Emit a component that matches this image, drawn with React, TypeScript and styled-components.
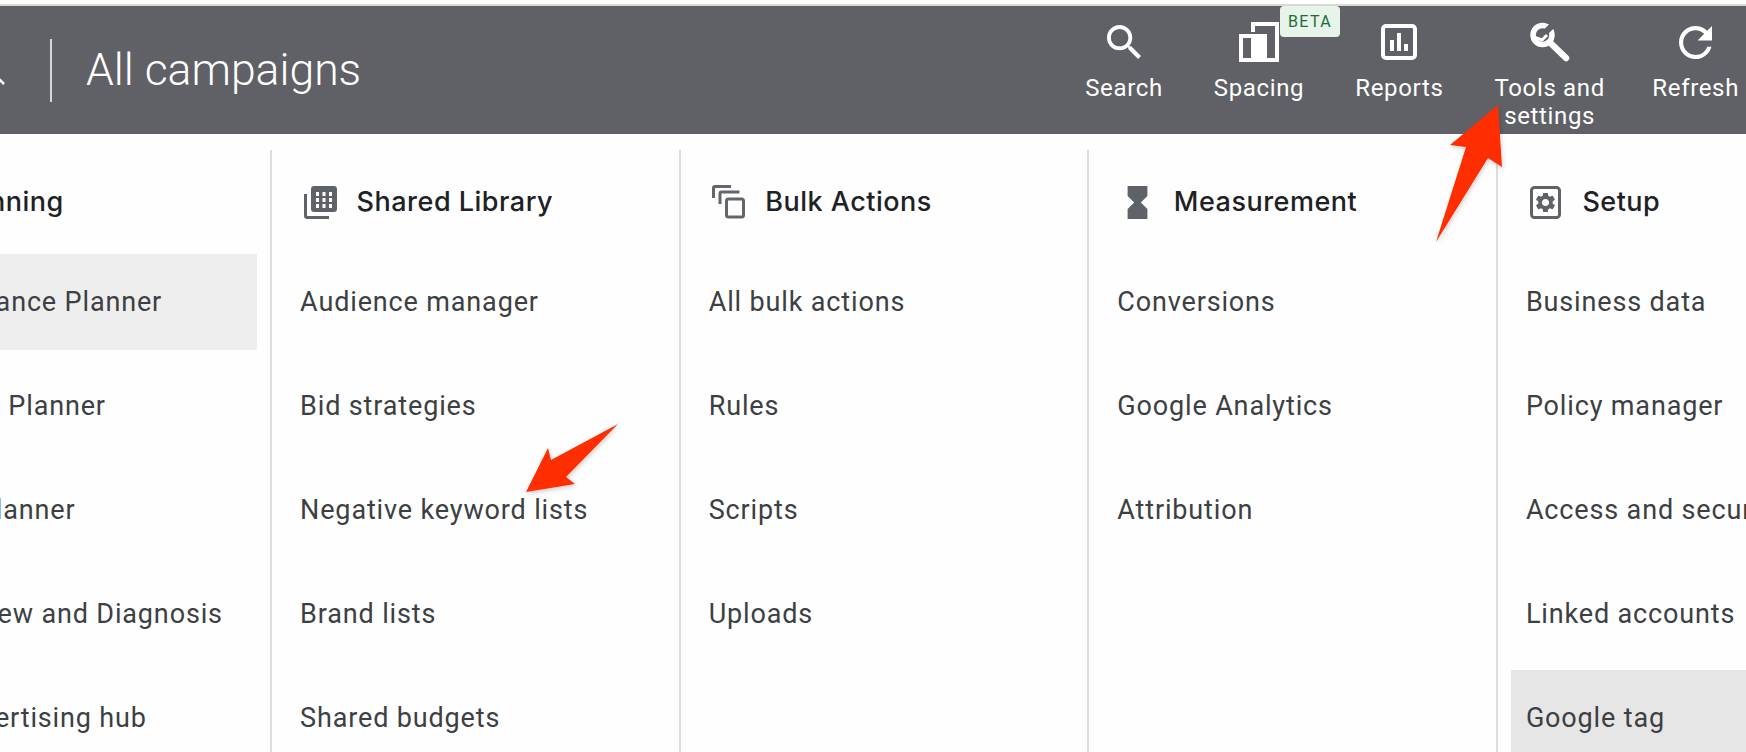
import React from "react"
import styled, {createGlobalStyle} from "styled-components"

const GlobalStyle = createGlobalStyle`
    html, body {
        margin: 0;
        padding: 0;
        background: #fefefe;
        overflow: hidden;
    }
`
const Page = styled.div`
    position: relative;
    width: 1746px;
    height: 752px;
    overflow: hidden;
    font-family: Roboto, "Liberation Sans", sans-serif;
    border-top: 4px solid #fff;
    box-sizing: border-box;
`
const Header = styled.header`
    display: flex;
    justify-content: space-between;
    align-items: flex-start;
    height: 130px;
    box-sizing: border-box;
    background: #5f6166;
    border-top: 2px solid #d9d9d6;
    padding-right: 7px;
`
const TitleGroup = styled.div`
    display: flex;
    align-items: center;
    height: 128px;
`
const Chevron = styled.svg`
    width: 5px;
    height: 12px;
    margin: 26px 45px 0 0;
`
const Separator = styled.div`
    width: 2px;
    height: 63px;
    background: #d5d6d8;
`
const Title = styled.h1`
    margin: 0 0 0 34px;
    font-size: 44.5px;
    font-weight: 300;
    color: #fff;
`
const Nav = styled.nav`
    display: flex;
    gap: 51px;
    padding-top: 16px;
`
const NavItem = styled.div<{$pull?: number}>`
    position: relative;
    display: flex;
    flex-direction: column;
    align-items: center;
    margin-right: ${p => p.$pull || 0}px;
    color: #fff;
`
const NavIcon = styled.div`
    height: 40px;
    display: flex;
    align-items: center;
    margin-bottom: 12px;
`
const NavLabel = styled.div`
    font-size: 24px;
    line-height: 28px;
    letter-spacing: 0.65px;
    text-align: center;
    white-space: nowrap;
`
const Beta = styled.span`
    position: absolute;
    top: -16px;
    left: calc(50% + 21px);
    width: 60px;
    height: 31px;
    display: flex;
    align-items: center;
    justify-content: center;
    border-radius: 4px;
    background: #e6f4ea;
    color: #1e6b3a;
    font-size: 16px;
    letter-spacing: 1.4px;
`
const Columns = styled.main`
    display: flex;
    margin: 16px 0 0 -138.5px;
`
const Column = styled.section`
    flex: 0 0 408.6px;
    box-sizing: border-box;
    border-left: 2px solid #dadce0;
    height: 640px;
`
const ColumnHead = styled.div`
    display: flex;
    align-items: center;
    height: 104px;
    padding-left: 30px;
`
const HeadIcon = styled.div`
    width: 36px;
    margin-right: 18.5px;
    display: flex;
    justify-content: center;
`
const HeadTitle = styled.h2`
    margin: 0 0 2px;
    font-family: Inter, Roboto, sans-serif;
    font-size: 27px;
    font-weight: 500;
    letter-spacing: 0.5px;
    color: #202124;
    white-space: nowrap;
`
const Item = styled.div<{$shade?: string}>`
    display: flex;
    align-items: center;
    height: 96px;
    margin: 0 13px 8px;
    padding-left: 15px;
    background: ${p => p.$shade || "transparent"};
    font-size: 27px;
    letter-spacing: 0.85px;
    color: #3c4043;
    white-space: nowrap;
    overflow: hidden;
`
const Annotations = styled.svg`
    position: absolute;
    left: 0;
    top: -4px;
    width: 1746px;
    height: 752px;
    pointer-events: none;
`

const SearchIcon = () => (
    <svg width="34" height="34" viewBox="3 3 17.5 17.5" fill="#fff">
        <path d="M15.5 14h-.79l-.28-.27C15.41 12.59 16 11.11 16 9.5 16 5.91 13.09 3 9.5 3S3 5.91 3 9.5 5.91 16 9.5 16c1.61 0 3.09-.59 4.23-1.57l.27.28v.79l5 4.99L20.49 19l-4.99-5zm-6 0C7.01 14 5 11.99 5 9.5S7.01 5 9.5 5 14 7.01 14 9.5 11.99 14 9.5 14z" />
    </svg>
)
const SpacingIcon = () => (
    <svg width="40" height="40" viewBox="0 0 40 40">
        <path d="M14 10V2h24v36H14" fill="none" stroke="#fff" strokeWidth="4" />
        <rect x="2" y="14" width="24" height="24" fill="none" stroke="#fff" strokeWidth="4" />
        <rect x="12" y="12" width="16" height="28" fill="#fff" />
    </svg>
)
const ReportsIcon = () => (
    <svg width="36" height="36" viewBox="0 0 36 36">
        <rect x="2" y="2" width="32" height="32" rx="3" fill="none" stroke="#fff" strokeWidth="4" />
        <path d="M9 16h4v11H9zM16 9h4v18h-4zM23 20h4v7h-4z" fill="#fff" />
    </svg>
)
const ToolsIcon = () => (
    <svg width="40" height="40" viewBox="0 0 40 40">
        <circle cx="12.5" cy="13" r="9.5" fill="none" stroke="#fff" strokeWidth="5.5" />
        <path d="M13 12.5L25 1" stroke="#5f6166" strokeWidth="6" />
        <path d="M5 15.5L12 18 17 13" fill="none" stroke="#fff" strokeWidth="3" />
        <path d="M20 20.5L36 36" stroke="#fff" strokeWidth="6.5" strokeLinecap="round" />
    </svg>
)
const RefreshIcon = () => (
    <svg width="33" height="33" viewBox="4 4 16 16" fill="#fff">
        <path d="M17.65 6.35C16.2 4.9 14.21 4 12 4c-4.42 0-7.99 3.58-7.99 8s3.57 8 7.99 8c3.73 0 6.84-2.55 7.73-6h-2.08c-.82 2.33-3.04 4-5.65 4-3.31 0-6-2.69-6-6s2.69-6 6-6c1.66 0 3.14.69 4.22 1.78L13 11h7V4l-2.35 2.35z" />
    </svg>
)

const LibraryIcon = () => (
    <svg width="33" height="33" viewBox="0 0 33 33" fill="#5f6368">
        <path d="M0 8h3v21c0 .6.4 1 1 1h21v3H3c-1.700 0-3-1.300-3-3z" />
        <path fillRule="evenodd" d="M10 0h20c1.700 0 3 1.300 3 3v20c0 1.700-1.300 3-3 3H10c-1.700 0-3-1.300-3-3V3c0-1.700 1.300-3 3-3zM12 6v4h3V6zM18.500 6v4h3V6zM25 6v4h3V6zM12 12v4h3v-4zM18.500 12v4h3v-4zM25 12v4h3v-4zM12 18v4h3v-4zM18.500 18v4h3v-4zM25 18v4h3v-4z" />
    </svg>
)
const BulkIcon = () => (
    <svg width="33" height="34" viewBox="0 0 33 34" fill="none" stroke="#63666a" strokeWidth="3">
        <path d="M1.500 13V3c0-.8.600-1.500 1.500-1.500h16" />
        <path d="M8 19V8.500c0-.8.600-1.500 1.500-1.500h18" />
        <rect x="14.500" y="14" width="17" height="18" rx="2" />
    </svg>
)
const HourglassIcon = () => (
    <svg width="21" height="33" viewBox="6 2 12 20" fill="#5f6368">
        <path d="M6 2v6h.01L6 8.010 10 12l-4 4 .01.01H6V22h12v-5.990h-.01L18 16l-4-4 4-3.990-.01-.01H18V2H6z" />
    </svg>
)
const SetupIcon = () => (
    <svg width="31" height="33" viewBox="0 0 31 33">
        <rect x="1.500" y="1.500" width="28" height="30" rx="3" fill="none" stroke="#5f6368" strokeWidth="3" />
        <g transform="translate(3.500 4.500) scale(1)">
            <path fill="#5f6368" d="M19.140 12.940c.04-.3.060-.61.060-.94 0-.32-.02-.64-.07-.94l2.030-1.580a.49.49 0 0 0 .12-.61l-1.920-3.320a.488.488 0 0 0-.59-.22l-2.390.96c-.5-.38-1.030-.7-1.620-.94l-.36-2.540a.484.484 0 0 0-.48-.41h-3.840c-.24 0-.43.170-.47.410l-.36 2.540c-.59.240-1.130.57-1.620.94l-2.390-.96c-.22-.08-.47 0-.59.220L2.740 8.870c-.12.210-.08.470.12.610l2.030 1.580c-.05.3-.09.630-.09.940s.02.640.07.940l-2.030 1.580a.49.49 0 0 0-.12.610l1.920 3.320c.12.220.37.290.59.220l2.390-.96c.5.380 1.030.7 1.620.94l.36 2.540c.05.240.24.410.48.410h3.840c.24 0 .44-.17.470-.41l.36-2.540c.59-.24 1.130-.56 1.620-.94l2.390.96c.22.080.47 0 .59-.22l1.920-3.320c.12-.22.070-.47-.12-.61l-2.010-1.580zM12 15.600c-1.980 0-3.600-1.620-3.600-3.600s1.620-3.600 3.600-3.600 3.600 1.620 3.600 3.600-1.620 3.600-3.600 3.600z" />
        </g>
    </svg>
)

const navItems = [
    {label: "Search", icon: <SearchIcon />},
    {label: "Spacing", icon: <SpacingIcon />, beta: true},
    {label: "Reports", icon: <ReportsIcon />},
    {label: <>Tools and<br />settings</>, icon: <ToolsIcon />, pull: -3.5},
    {label: "Refresh", icon: <RefreshIcon />},
]

const columns = [
    {
        title: "Planning",
        icon: null,
        items: ["Performance Planner", "Keyword Planner", "Reach Planner", "Ad Preview and Diagnosis", "App advertising hub"],
        shades: {0: "#eeeeee"} as Record<number, string>,
    },
    {
        title: "Shared Library",
        icon: <LibraryIcon />,
        items: ["Audience manager", "Bid strategies", "Negative keyword lists", "Brand lists", "Shared budgets"],
    },
    {
        title: "Bulk Actions",
        icon: <BulkIcon />,
        items: ["All bulk actions", "Rules", "Scripts", "Uploads"],
    },
    {
        title: "Measurement",
        icon: <HourglassIcon />,
        items: ["Conversions", "Google Analytics", "Attribution"],
    },
    {
        title: "Setup",
        icon: <SetupIcon />,
        items: ["Business data", "Policy manager", "Access and security", "Linked accounts", "Google tag"],
        shades: {4: "#e6e6e6"} as Record<number, string>,
    },
]

const App = () => {
    return (
        <Page>
            <GlobalStyle />
            <Header>
                <TitleGroup>
                    <Chevron viewBox="0 0 5 12">
                        <path d="M-3 0L4 7" stroke="#fff" strokeWidth="2.500" fill="none" />
                    </Chevron>
                    <Separator />
                    <Title>All campaigns</Title>
                </TitleGroup>
                <Nav>
                    {navItems.map((item, i) => (
                        <NavItem key={i} $pull={item.pull}>
                            <NavIcon>{item.icon}</NavIcon>
                            <NavLabel>{item.label}</NavLabel>
                            {item.beta && <Beta>BETA</Beta>}
                        </NavItem>
                    ))}
                </Nav>
            </Header>
            <Columns>
                {columns.map(col => (
                    <Column key={col.title}>
                        <ColumnHead>
                            <HeadIcon>{col.icon}</HeadIcon>
                            <HeadTitle>{col.title}</HeadTitle>
                        </ColumnHead>
                        {col.items.map((name, i) => (
                            <Item key={name} $shade={col.shades?.[i]}>{name}</Item>
                        ))}
                    </Column>
                ))}
            </Columns>
            <Annotations viewBox="0 0 1746 752">
                <defs>
                    <filter id="arrowShadow" x="-20%" y="-20%" width="140%" height="140%">
                        <feDropShadow dx="1" dy="2" stdDeviation="2" floodColor="#000" floodOpacity="0.18" />
                    </filter>
                </defs>
                <g fill="#ff2d00" filter="url(#arrowShadow)">
                    <polygon points="1498,105 1450,145 1466,147 1436,242 1488,158 1502,167" />
                    <polygon points="618,424 551,460 548,448 526,492 575,484 566,477" />
                </g>
            </Annotations>
        </Page>
    )
}

export default App
